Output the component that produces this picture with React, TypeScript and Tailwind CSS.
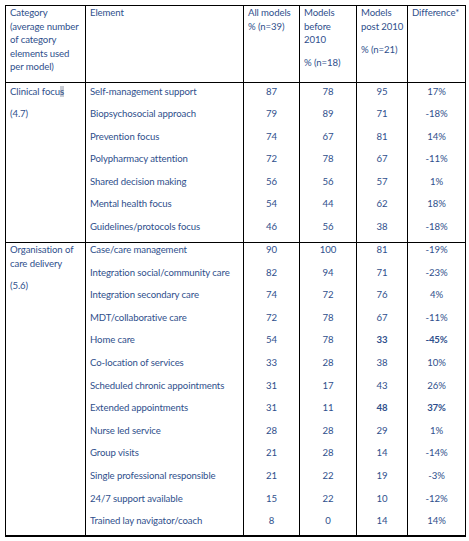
type Row = {
  element: string;
  all: string;
  before: string;
  post: string;
  diff: string;
  bold?: boolean;
};

type Group = {
  category: string[][];
  rows: Row[];
  height: string;
  top: string;
};

const groups: Group[] = [
  {
    category: [["Clinical focus"], ["(4.7)"]],
    height: "h-[160px]",
    top: "pt-[1.5px]",
    rows: [
      { element: "Self-management support", all: "87", before: "78", post: "95", diff: "17%" },
      { element: "Biopsychosocial approach", all: "79", before: "89", post: "71", diff: "-18%" },
      { element: "Prevention focus", all: "74", before: "67", post: "81", diff: "14%" },
      { element: "Polypharmacy attention", all: "72", before: "78", post: "67", diff: "-11%" },
      { element: "Shared decision making", all: "56", before: "56", post: "57", diff: "1%" },
      { element: "Mental health focus", all: "54", before: "44", post: "62", diff: "18%" },
      { element: "Guidelines/protocols focus", all: "46", before: "56", post: "38", diff: "-18%" }
    ]
  },
  {
    category: [["Organisation of", "care delivery"], ["(5.6)"]],
    height: "h-[293px]",
    top: "pt-0",
    rows: [
      { element: "Case/care management", all: "90", before: "100", post: "81", diff: "-19%" },
      { element: "Integration social/community care", all: "82", before: "94", post: "71", diff: "-23%" },
      { element: "Integration secondary care", all: "74", before: "72", post: "76", diff: "4%" },
      { element: "MDT/collaborative care", all: "72", before: "78", post: "67", diff: "-11%" },
      { element: "Home care", all: "54", before: "78", post: "33", diff: "-45%", bold: true },
      { element: "Co-location of services", all: "33", before: "28", post: "38", diff: "10%" },
      { element: "Scheduled chronic appointments", all: "31", before: "17", post: "43", diff: "26%" },
      { element: "Extended appointments", all: "31", before: "11", post: "48", diff: "37%", bold: true },
      { element: "Nurse led service", all: "28", before: "28", post: "29", diff: "1%" },
      { element: "Group visits", all: "21", before: "28", post: "14", diff: "-14%" },
      { element: "Single professional responsible", all: "21", before: "22", post: "19", diff: "-3%" },
      { element: "24/7 support available", all: "15", before: "22", post: "10", diff: "-12%" },
      { element: "Trained lay navigator/coach", all: "8", before: "0", post: "14", diff: "14%" }
    ]
  }
];

function Cell({ children, className = "", last = false }: { children: React.ReactNode; className?: string; last?: boolean }) {
  return (
    <div className={`${last ? "" : "border-r border-black"} border-b border-black pl-[4px] pr-[3px] ${className}`}>
      {children}
    </div>
  );
}

// a cell made of paragraphs; each paragraph is a list of forced lines
function Paras({ paras, gap = "gap-[9.1px]" }: { paras: string[][]; gap?: string }) {
  return (
    <div className={`flex flex-col ${gap}`}>
      {paras.map((lines, i) => (
        <div key={i}>
          {lines.map((l, j) => (
            <p key={j} className="leading-[13.5px] whitespace-nowrap">
              {l === "Clinical focus" ? (
                <>
                  Clinical focu<span className="bg-[#c8ccd4]">s</span>
                </>
              ) : (
                l
              )}
            </p>
          ))}
        </div>
      ))}
    </div>
  );
}

function Stack({ items, center = false }: { items: { text: string; bold?: boolean }[]; center?: boolean }) {
  return (
    <div className={`flex flex-col gap-[9.1px] ${center ? "items-center pr-[1px]" : ""}`}>
      {items.map((it, i) => (
        <p key={i} className={`leading-[13.5px] whitespace-nowrap ${it.bold ? "font-bold" : ""}`}>
          {it.text}
        </p>
      ))}
    </div>
  );
}

export default function App() {
  return (
    <div className="w-[469px] h-[541px] bg-white pl-[5px] pt-[5px] font-['Lato',sans-serif] text-[9.6px] tracking-[-0.1px] text-[#2f4f8c]">
      <div className="grid w-[461px] grid-cols-[80px_158px_56px_57px_51px_1fr] border-[1.5px] border-b-[0.5px] border-black">
        {/* header */}
        <Cell className="h-[77px]">
          <Paras paras={[["Category", "(average number", "of category", "elements used", "per model)"]]} />
        </Cell>
        <Cell>
          <Paras paras={[["Element"]]} />
        </Cell>
        <Cell>
          <Paras paras={[["All models", "% (n=39)"]]} />
        </Cell>
        <Cell>
          <Paras gap="gap-[9.5px]" paras={[["Models", "before", "2010"], ["% (n=18)"]]} />
        </Cell>
        <Cell>
          <Paras gap="gap-[9.5px]" paras={[["Models", "post 2010"], ["% (n=21)"]]} />
        </Cell>
        <Cell last>
          <Paras paras={[["Difference*"]]} />
        </Cell>

        {groups.map((g, gi) => (
          <div key={gi} className="contents">
            <Cell className={`${g.height} ${g.top}`}>
              <Paras paras={g.category} />
            </Cell>
            <Cell className={g.top}>
              <Stack items={g.rows.map((r) => ({ text: r.element }))} />
            </Cell>
            <Cell className={g.top}>
              <Stack center items={g.rows.map((r) => ({ text: r.all }))} />
            </Cell>
            <Cell className={g.top}>
              <Stack center items={g.rows.map((r) => ({ text: r.before }))} />
            </Cell>
            <Cell className={g.top}>
              <Stack center items={g.rows.map((r) => ({ text: r.post, bold: r.bold }))} />
            </Cell>
            <Cell last className={g.top}>
              <Stack center items={g.rows.map((r) => ({ text: r.diff, bold: r.bold }))} />
            </Cell>
          </div>
        ))}
      </div>
    </div>
  );
}
